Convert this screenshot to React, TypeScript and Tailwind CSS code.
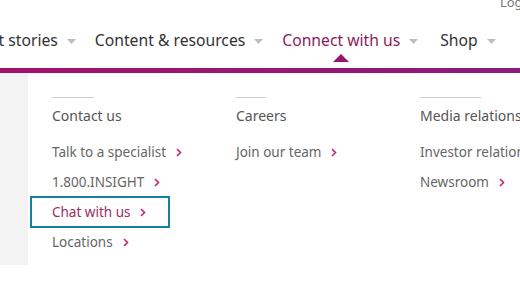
import React from "react";

const Caret = () => (
  <svg width="9" height="5" viewBox="0 0 9 5" className="ml-[9px] mt-[2px]">
    <path d="M0 0 L9 0 L4.5 5 Z" fill="#bdbdbd" />
  </svg>
);

const Chev = () => (
  <svg width="6" height="9" viewBox="0 0 6 9" className="ml-[10px]">
    <path d="M1 1 L4.5 4.5 L1 8" fill="none" stroke="#c8266f" strokeWidth="1.6" />
  </svg>
);

const NavItem = ({ label, active }: { label: string; active?: boolean }) => (
  <div className={"relative flex items-center " + (active ? "mr-[22px]" : "mr-[19px]")}>
    <span className={active ? "text-[#8a1d5c]" : "text-[#333333]"}>{label}</span>
    <Caret />
    {active && (
      <svg width="16" height="8" viewBox="0 0 16 8" className="absolute left-[51px] top-[25px]">
        <path d="M0 8 L8 0 L16 8 Z" fill="#9a1471" />
      </svg>
    )}
  </div>
);

const LinkRow = ({ label, boxed }: { label: string; boxed?: boolean }) => (
  <div
    className={
      "flex items-center h-[30px] " +
      (boxed ? "border-[2px] border-[#1580a0] ml-[-22px] pl-[20px] w-[140px] h-[32px] my-[-1px]" : "")
    }
  >
    <span className={boxed ? "text-[#9b2c5f]" : "text-[#666666]"}>{label}</span>
    <Chev />
  </div>
);

const Column = ({ title, lineW, links, w }: { title: string; lineW: string; links: string[]; w: string }) => (
  <div className={"flex flex-col shrink-0 " + w}>
    <div className={"h-px bg-[#cfcfcf] " + lineW} />
    <div className="text-[14px] text-[#555555] mt-[9px] leading-[18px]">{title}</div>
    <div className="flex flex-col mt-[12px] text-[13.5px]">
      {links.map((l) => (
        <LinkRow key={l} label={l} boxed={l === "Chat with us"} />
      ))}
    </div>
  </div>
);

export default function App() {
  return (
    <div className="w-[520px] h-[281px] bg-white overflow-hidden relative" style={{ fontFamily: "'Noto Sans', sans-serif" }}>
      <div className="flex justify-end h-[10px] pr-0">
        <span className="text-[13px] text-[#777777] leading-[13px] mt-[-4px] mr-[-14px]">Login</span>
      </div>
      <div className="flex items-center h-[58px] text-[15.7px] ml-[-38px] whitespace-nowrap pt-[4px]">
        <NavItem label="Client stories" />
        <NavItem label="Content & resources" />
        <NavItem label="Connect with us" active />
        <NavItem label="Shop" />
      </div>
      <div className="h-[5px] bg-gradient-to-r from-[#a50f6c] to-[#8a1a7c]" />
      <div className="flex">
        <div className="w-[28px] h-[192px] bg-[#f4f3f3] shrink-0" />
        <div className="flex pt-[24px] pl-[24px]">
          <Column title="Contact us" lineW="w-[42px]" w="w-[184px]" links={["Talk to a specialist", "1.800.INSIGHT", "Chat with us", "Locations"]} />
          <Column title="Careers" lineW="w-[30px]" w="w-[184px]" links={["Join our team"]} />
          <Column title="Media relations" lineW="w-[61px]" w="w-[184px]" links={["Investor relations", "Newsroom"]} />
        </div>
      </div>
    </div>
  );
}
